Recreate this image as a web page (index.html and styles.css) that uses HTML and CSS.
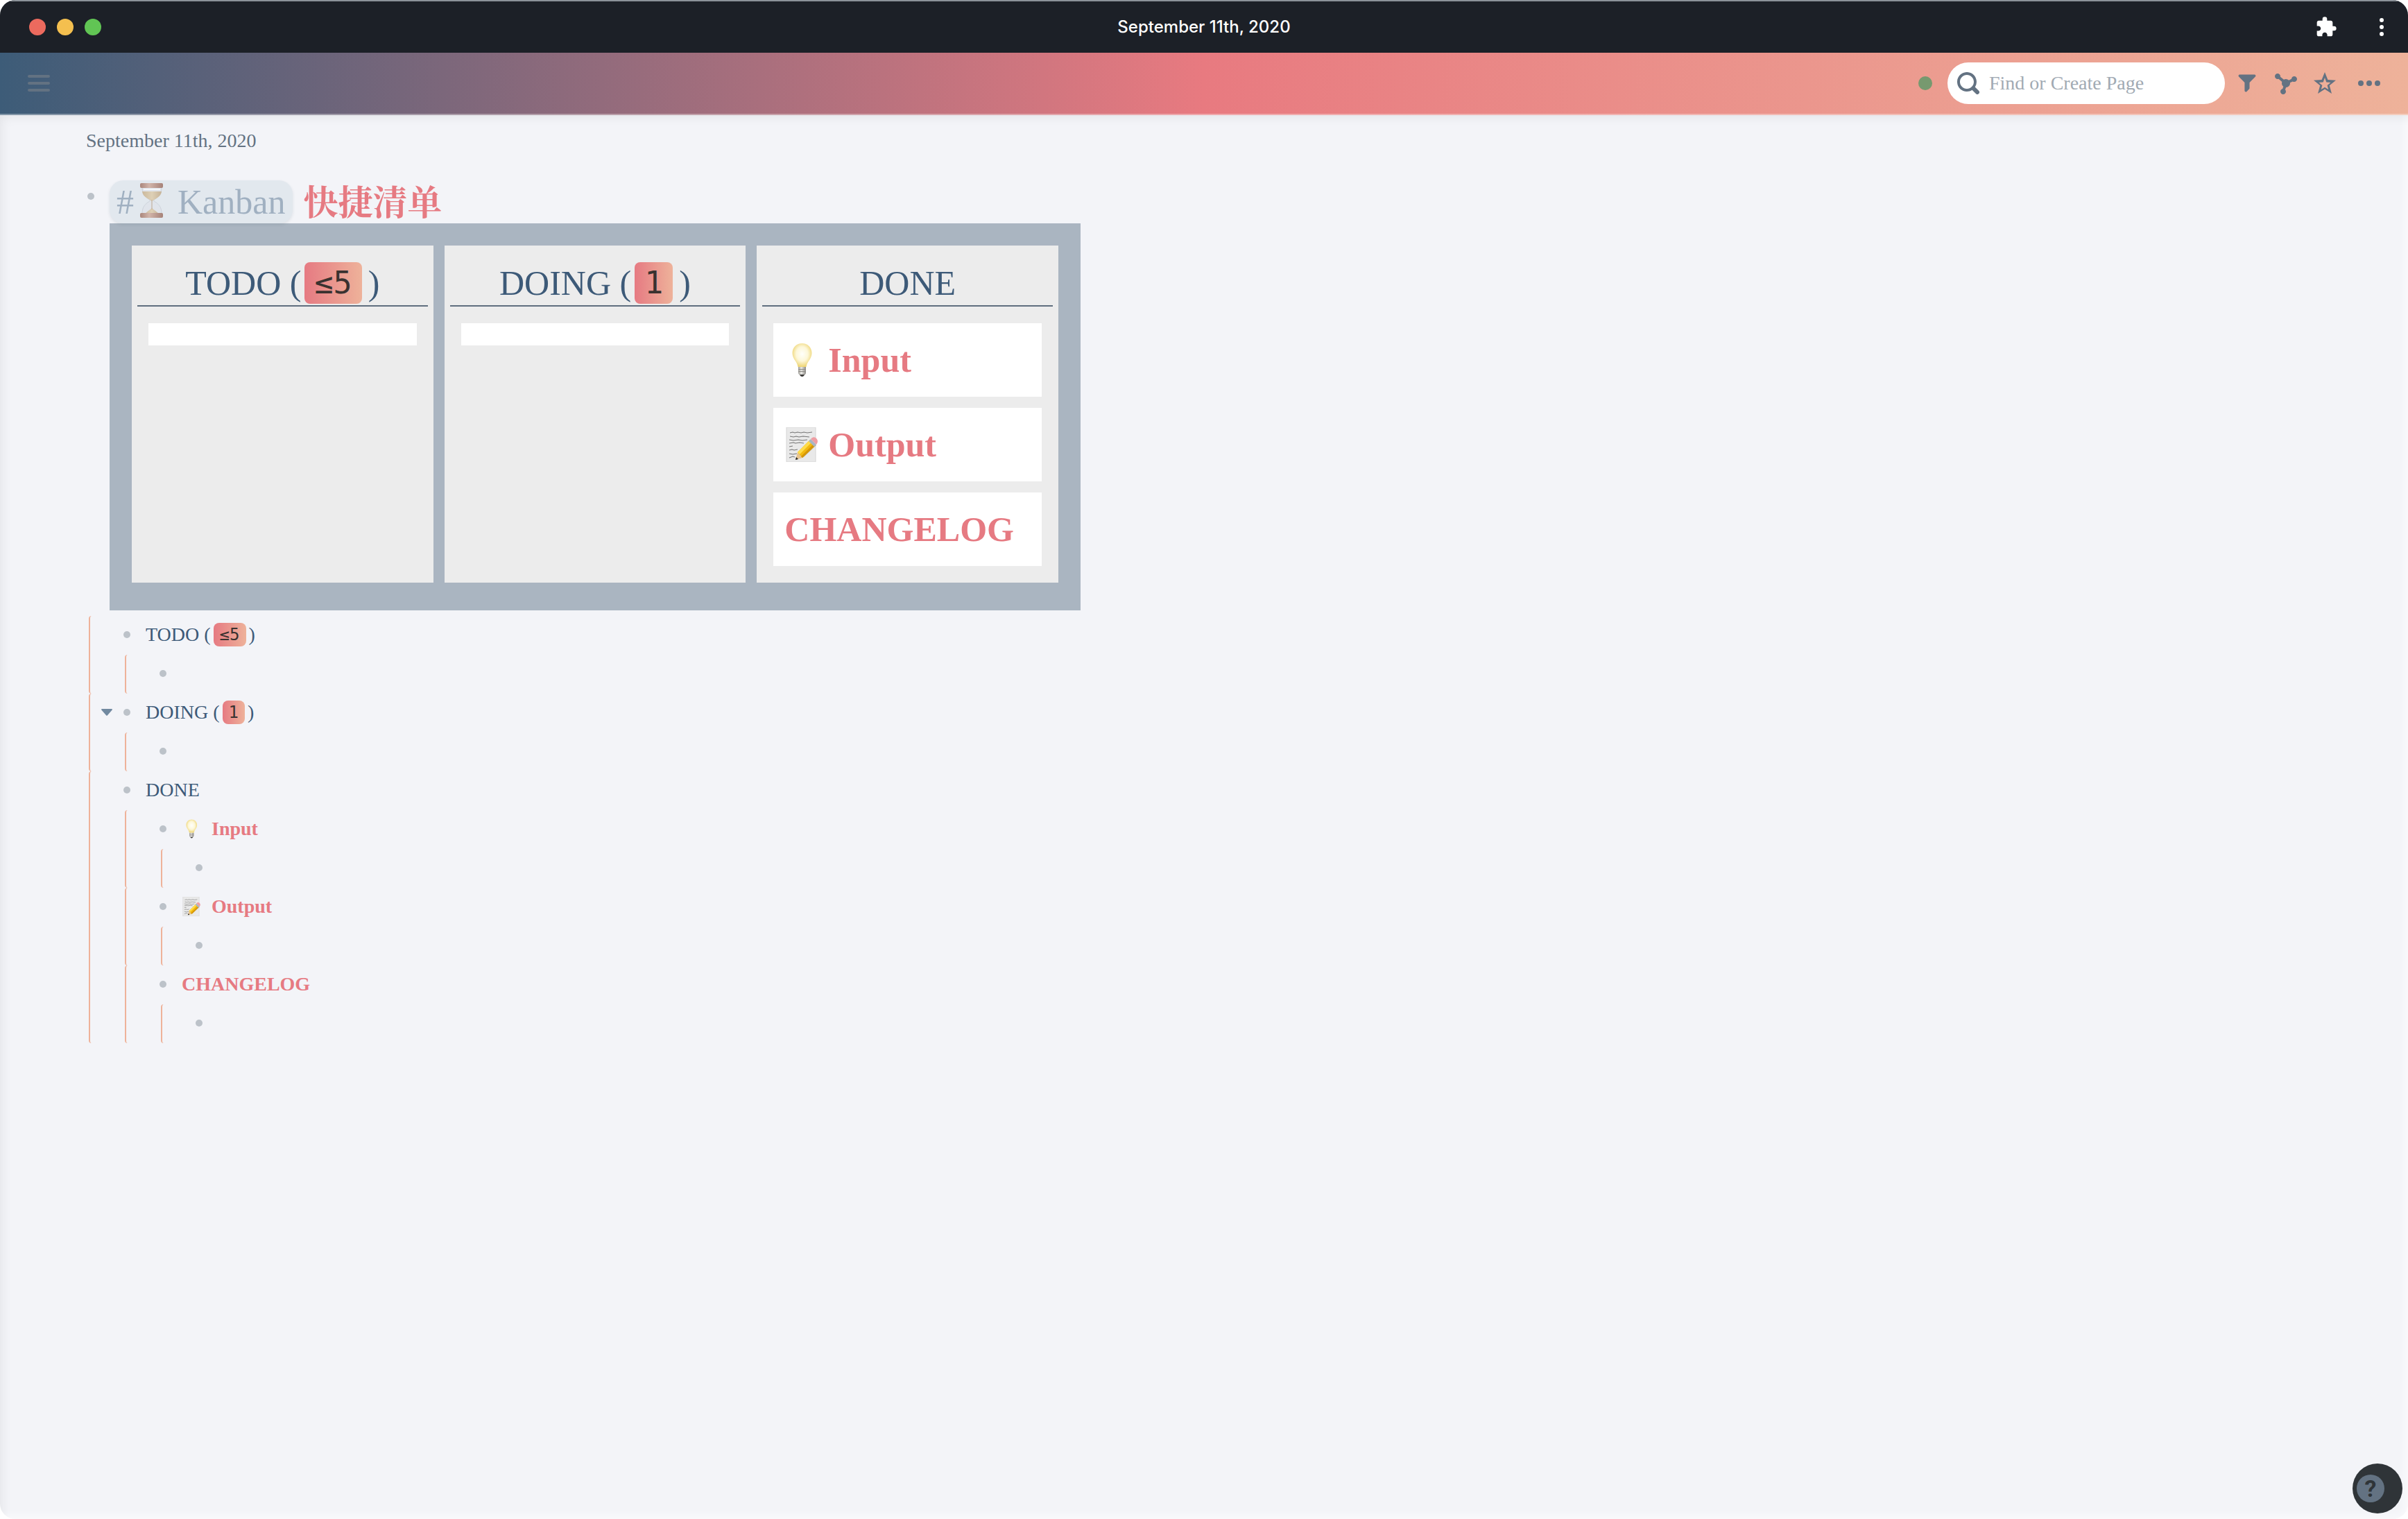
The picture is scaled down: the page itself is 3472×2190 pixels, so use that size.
FILE: index.html
```html
<!DOCTYPE html>
<html lang="en">
<head>
<meta charset="utf-8">
<title>September 11th, 2020</title>
<link rel="stylesheet" href="styles.css">
</head>
<body>
<svg class="defs" aria-hidden="true">
  <defs>
    <radialGradient id="glass" cx=".5" cy=".45" r=".55">
      <stop offset="0" stop-color="#fffffa"/><stop offset=".55" stop-color="#fdf7d8"/><stop offset="1" stop-color="#eed574"/>
    </radialGradient>
    <linearGradient id="metal"><stop offset="0" stop-color="#9c9a94"/><stop offset=".4" stop-color="#e9e8e4"/><stop offset="1" stop-color="#8b8984"/></linearGradient>
    <linearGradient id="wood"><stop offset="0" stop-color="#8d5340"/><stop offset=".4" stop-color="#c99a86"/><stop offset="1" stop-color="#874c3a"/></linearGradient>
    <linearGradient id="sand"><stop offset="0" stop-color="#c0a070"/><stop offset=".5" stop-color="#dcc49a"/><stop offset="1" stop-color="#b8976a"/></linearGradient>
    <symbol id="bulb" viewBox="0 0 50 50">
      <path d="M20 35h11v8q0 3-3 4h-5q-3-1-3-4z" fill="url(#metal)"/>
      <path d="M20 38.500h11M20 41.500h11" stroke="#8d8b86" stroke-width="1"/>
      <path d="M22 46h7q-1 3-3.500 3T22 46z" fill="#3e3c3a"/>
      <path d="M25.500 1C17.500 1 11.500 7 11.500 15c0 9 7 12 8 20h12c1-8 8-11 8-20 0-8-6-14-14-14z" fill="url(#glass)"/>
    </symbol>
    <symbol id="memo" viewBox="0 0 50 50">
      <path d="M3 0h42v50H3z" fill="#e9e9e9" stroke="#d5d5d5"/>
      <path d="M8 8l4-1 3 1 4-1 5 1 4-1 5 1 7-1M8 13l5 1 4-1 4 1 6-1 9 1M7 18l6 1 7-1 6 1 7-1M7 23l6-1 3 1 6-1 6 1M7 28l5-1M7 33l4-1 3 1 5-1M7 38l5 1 6-1M7 44l5-2 3 1" fill="none" stroke="#777" stroke-width="1.100"/>
      <path d="M17 46l3-10L38 18l8 8-18 17z" fill="#7c746a" opacity=".35"/>
      <path d="M16 47l3-11 7 8z" fill="#e8c48e"/>
      <path d="M16 47l1-4 3 3z" fill="#222"/>
      <path d="M19 36l18-18 8 8-19 18z" fill="#f2b90f"/>
      <path d="M19 36l18-18 3 3-18 18z" fill="#ffdc4a"/>
      <path d="M24 42l18-18 3 2-19 18z" fill="#d59608"/>
      <path d="M35 20l3-3 8 8-3 3z" fill="#a9b6c2"/>
      <path d="M38 17c3-4 6-3 8-1s3 5 0 9z" fill="#ee9ea4"/>
    </symbol>
    <symbol id="hourglass" viewBox="0 0 50 50">
      <path d="M12 6h28c0 11-5 14-12 19 7 5 12 8 12 19H12c0-11 5-14 12-19-7-5-12-8-12-19z" fill="#dfe3ea" stroke="#c3c8d2"/>
      <path d="M12 12h28c-1 7-6 9-14 14-8-5-13-7-14-14z" fill="url(#sand)"/>
      <path d="M26 24v12q4 3 10 8H16q6-5 10-8" fill="url(#sand)"/>
      <path d="M25.500 24h1v14h-1z" fill="#a98660"/>
      <rect x="9" y="0" width="33" height="7" rx="2" fill="url(#wood)"/>
      <rect x="9" y="43" width="33" height="7" rx="2" fill="url(#wood)"/>
      <path d="M14 8h24v2H14z" fill="#fff"/>
    </symbol>
  </defs>
</svg>

<div class="window">
  <header class="titlebar">
    <div class="lights"><i class="light close"></i><i class="light minimize"></i><i class="light zoom"></i></div>
    <div class="window-title">September 11th, 2020</div>
    <div class="window-tools">
      <button class="icon-button" aria-label="Extensions"><svg width="32" height="32" viewBox="0 0 24 24"><path d="M20.500 11H19V7c0-1.100-.9-2-2-2h-4V3.500a2.500 2.500 0 00-5 0V5H4c-1.100 0-1.990.9-1.990 2v3.800H3.500c1.490 0 2.700 1.210 2.700 2.700s-1.210 2.700-2.700 2.700H2V20c0 1.100.9 2 2 2h3.800v-1.500c0-1.490 1.210-2.700 2.700-2.700s2.700 1.210 2.700 2.700V22H17c1.100 0 2-.9 2-2v-4h1.500a2.500 2.500 0 000-5z"/></svg></button>
      <button class="icon-button" aria-label="Window menu"><svg width="8" height="32" viewBox="0 0 8 32"><circle cx="4" cy="6" r="3"/><circle cx="4" cy="16" r="3"/><circle cx="4" cy="26" r="3"/></svg></button>
    </div>
  </header>

  <nav class="topbar">
    <button class="icon-button" aria-label="Menu"><svg width="32" height="24" viewBox="0 0 32 24"><rect width="32" height="4" rx="2"/><rect y="10" width="32" height="4" rx="2"/><rect y="20" width="32" height="4" rx="2"/></svg></button>
    <div class="tools">
      <span class="sync"></span>
      <label class="search">
        <svg width="32" height="32" viewBox="0 0 16 16"><path d="M15.550 13.430l-2.670-2.680a6.940 6.940 0 001.110-3.760c0-3.870-3.130-7-7-7s-7 3.130-7 7 3.130 7 7 7c1.390 0 2.680-.42 3.760-1.110l2.680 2.670a1.498 1.498 0 102.120-2.120zm-8.560-1.440c-2.760 0-5-2.240-5-5s2.240-5 5-5 5 2.240 5 5-2.240 5-5 5z"/></svg>
        <input type="text" placeholder="Find or Create Page" aria-label="Find or Create Page">
      </label>
      <div class="actions">
        <button class="icon-button" aria-label="Filter"><svg width="32" height="32" viewBox="-1 -1 18 18"><path d="M13.990.99h-12a1.003 1.003 0 00-.71 1.710l4.710 4.710V14a1.003 1.003 0 001.710.71l2-2c.18-.18.29-.43.29-.71V7.410L14.700 2.700a1.003 1.003 0 00-.71-1.710z"/></svg></button>
        <button class="icon-button" aria-label="Graph"><svg width="32" height="32" viewBox="0 0 16 16"><path d="M14 3c-1.060 0-1.920.83-1.990 1.880l-1.930.97A2.950 2.950 0 008 5c-.56 0-1.080.16-1.520.43L3.970 3.340C3.980 3.230 4 3.120 4 3c0-1.100-.9-2-2-2s-2 .9-2 2 .9 2 2 2c.24 0 .47-.05.68-.13l2.510 2.090C5.080 7.290 5 7.630 5 8c0 .96.46 1.810 1.160 2.350l-.56 1.690c-.91.19-1.600.99-1.600 1.960 0 1.100.9 2 2 2s2-.9 2-2c0-.51-.2-.97-.51-1.320l.56-1.690C9.680 10.900 11 9.610 11 8c0-.12-.02-.23-.04-.35l1.900-.95c.32.18.71.3 1.140.3 1.100 0 2-.9 2-2s-.9-2-2-2z"/></svg></button>
        <button class="icon-button wide-gap" aria-label="Add to shortcuts"><svg width="32" height="32" viewBox="0 0 32 32"><path fill-rule="evenodd" d="M16 0l4.400 11 11.600.7-9.200 7.600L26 31l-10-6.500L6 31l3.200-11.700L0 11.700l11.600-.7zM16 8l-2.300 6.400-6.200.5 4.900 4-1.600 6.100 5.200-3.300 5.200 3.300-1.600-6.100 4.900-4-6.200-.5z"/></svg></button>
        <button class="icon-button" aria-label="More"><svg width="32" height="32" viewBox="0 0 32 32"><circle cx="4" cy="16" r="4"/><circle cx="16" cy="16" r="4"/><circle cx="28" cy="16" r="4"/></svg></button>
      </div>
    </div>
  </nav>

  <main class="page">
    <h1 class="page-title">September 11th, 2020</h1>

    <section class="block">
      <span class="bullet"></span>
      <div class="block-body">
        <div class="heading">
          <a class="tag" href="#kanban">#<svg class="emoji" role="img" aria-label="hourglass"><use href="#hourglass"/></svg><span>Kanban</span></a>
          <strong class="cjk" lang="zh">快捷清单</strong>
        </div>

        <div class="board">
          <section class="column">
            <h2 class="column-title"><span>TODO (</span><code class="count">≤5</code><span>)</span></h2>
            <div class="cards"><div class="card"></div></div>
          </section>
          <section class="column">
            <h2 class="column-title"><span>DOING (</span><code class="count">1</code><span>)</span></h2>
            <div class="cards"><div class="card"></div></div>
          </section>
          <section class="column">
            <h2 class="column-title">DONE</h2>
            <div class="cards">
              <div class="card"><strong class="card-text"><svg class="emoji" role="img" aria-label="light bulb"><use href="#bulb"/></svg>Input</strong></div>
              <div class="card"><strong class="card-text"><svg class="emoji" role="img" aria-label="memo"><use href="#memo"/></svg>Output</strong></div>
              <div class="card"><strong class="card-text">CHANGELOG</strong></div>
            </div>
          </section>
        </div>
      </div>
    </section>

    <ul class="outline">
      <li>
        <div class="row"><span class="caret"></span><span class="bullet"></span><div class="row-text"><span>TODO (</span><code class="count">≤5</code><span>)</span></div></div>
        <ul><li><div class="row"><span class="caret"></span><span class="bullet"></span></div></li></ul>
      </li>
      <li>
        <div class="row"><button class="caret" aria-label="Collapse"><svg width="16" height="10" viewBox="0 0 16 10"><path d="M1 0h14q1.500.5.500 1.800L9 9.300q-1 1-2 0L.5 1.800Q-.5.500 1 0z"/></svg></button><span class="bullet"></span><div class="row-text"><span>DOING (</span><code class="count">1</code><span>)</span></div></div>
        <ul><li><div class="row"><span class="caret"></span><span class="bullet"></span></div></li></ul>
      </li>
      <li>
        <div class="row"><span class="caret"></span><span class="bullet"></span><div class="row-text">DONE</div></div>
        <ul>
          <li>
            <div class="row"><span class="caret"></span><span class="bullet"></span><strong class="row-text"><svg class="emoji" role="img" aria-label="light bulb"><use href="#bulb"/></svg>Input</strong></div>
            <ul><li><div class="row"><span class="caret"></span><span class="bullet"></span></div></li></ul>
          </li>
          <li>
            <div class="row"><span class="caret"></span><span class="bullet"></span><strong class="row-text"><svg class="emoji" role="img" aria-label="memo"><use href="#memo"/></svg>Output</strong></div>
            <ul><li><div class="row"><span class="caret"></span><span class="bullet"></span></div></li></ul>
          </li>
          <li>
            <div class="row"><span class="caret"></span><span class="bullet"></span><strong class="row-text">CHANGELOG</strong></div>
            <ul><li><div class="row"><span class="caret"></span><span class="bullet"></span></div></li></ul>
          </li>
        </ul>
      </li>
    </ul>
  </main>

  <button class="help" aria-label="Help"><span class="help-mark">?</span></button>
</div>
</body>
</html>
```

FILE: styles.css
```css
* {
  box-sizing: border-box;
}

:root {
  --slate: #637282;
  --navy: #3d5a78;
  --rose: #e67a82;
  --peach: #eeb29a;
  --serif: "Liberation Serif", "Times New Roman", "Noto Serif CJK SC", "Noto Sans CJK SC", serif;
}

body {
  margin: 0;
  background: #fff;
  color: var(--navy);
  font: 28px/34px var(--serif);
}

button {
  border: 0;
  padding: 0;
  background: none;
  font: inherit;
}

svg {
  display: block;
  fill: currentColor;
}

.defs {
  position: absolute;
  width: 0;
  height: 0;
}

.window {
  display: flex;
  flex-direction: column;
  min-height: 100vh;
  border-radius: 22px;
  overflow: hidden;
  background: #f3f4f8;
}

/* Title bar */

.titlebar {
  display: grid;
  grid-template-columns: 1fr auto 1fr;
  align-items: center;
  height: 76px;
  padding: 0 34px;
  border-top: 2px solid #8b9299;
  background: #1c2027;
  color: #fff;
}

.lights {
  display: flex;
  gap: 16px;
  padding-left: 8px;
}

.light {
  width: 24px;
  height: 24px;
  border-radius: 50%;
}

.close { background: #ec6a5e; }
.minimize { background: #f4bf4f; }
.zoom { background: #61c554; }

.window-title {
  font: 500 24px/32px Inter, "Liberation Sans", sans-serif;
}

.window-tools {
  display: flex;
  justify-content: flex-end;
  gap: 60px;
}

.icon-button {
  color: inherit;
}

/* Top bar */

.topbar {
  display: flex;
  align-items: center;
  justify-content: space-between;
  height: 90px;
  padding: 0 40px;
  border-bottom: 2px solid rgba(255, 255, 255, 0.35);
  background: linear-gradient(90deg, #3d5c78, #e87a80 50%, #eeb29a) border-box;
  color: var(--slate);
}

.tools {
  display: flex;
  align-items: center;
}

.sync {
  width: 20px;
  height: 20px;
  margin-right: 22px;
  border-radius: 50%;
  background: #77996f;
}

.search {
  display: flex;
  align-items: center;
  gap: 14px;
  width: 400px;
  height: 60px;
  margin-right: 16px;
  padding: 0 14px;
  border-radius: 30px;
  background: #fff;
}

.search input {
  flex: 1;
  min-width: 0;
  border: 0;
  padding: 0;
  background: none;
  color: var(--slate);
  font: inherit;
}

.search input::placeholder {
  color: #a1aab3;
  opacity: 1;
}

.actions {
  display: flex;
  gap: 24px;
}

.wide-gap {
  margin-right: 8px;
}

/* Page */

.page {
  flex: 1;
  padding: 20px 124px;
  box-shadow:
    inset 14px 14px 16px -12px rgba(0, 0, 0, 0.07),
    inset -14px -14px 14px -10px rgba(255, 255, 255, 0.7);
}

.page-title {
  margin: 0 0 40px;
  color: var(--slate);
  font: inherit;
}

.bullet {
  flex: none;
  width: 10px;
  height: 10px;
  border-radius: 50%;
  background: #bcc2c9;
}

.block {
  display: flex;
  gap: 22px;
  padding-left: 2px;
}

.block > .bullet {
  margin-top: 18px;
}

.heading {
  display: flex;
  gap: 16px;
  height: 62px;
  font-size: 50px;
  line-height: 62px;
}

.tag {
  display: flex;
  align-items: center;
  padding: 0 10px;
  border-radius: 20px;
  background: #e2e8ee;
  box-shadow: 0 2px 4px rgba(60, 80, 100, 0.12);
  color: #a0b0c1;
  text-decoration: none;
}

.tag .emoji {
  margin-bottom: 4px;
  opacity: 0.65;
}

.cjk {
  color: var(--rose);
  line-height: 66px;
}

.emoji {
  flex: none;
  width: 50px;
  height: 50px;
  margin-right: 13px;
}

/* Kanban board */

.board {
  display: grid;
  grid-template-columns: repeat(3, 1fr);
  gap: 16px;
  width: 1400px;
  padding: 32px 32px 40px;
  background: #aab5c1;
}

.column {
  padding: 0 8px;
  background: #ececec;
}

.column-title {
  display: flex;
  justify-content: center;
  margin: 0;
  padding: 24px 0 2px;
  border-bottom: 2px solid #5f6e7e;
  font-weight: 400;
  font-size: 50px;
  line-height: 60px;
}

.count {
  margin: 0 4px;
  padding: 0 9px;
  border-radius: 8px;
  background: linear-gradient(90deg, #e67a82, #eeb29a);
  color: #3a3230;
  font: 24px/34px "DejaVu Sans Mono", monospace;
}

.column-title .count {
  margin: 0 9px 0 5px;
  padding: 0 14px;
  font-size: 45px;
  line-height: 60px;
}

.cards {
  display: flex;
  flex-direction: column;
  gap: 16px;
  padding: 24px 16px;
}

.card {
  padding: 16px;
  background: #fff;
}

.card-text {
  display: flex;
  align-items: center;
  color: var(--rose);
  font-size: 50px;
  line-height: 74px;
}

/* Outline */

.outline {
  margin: 8px 0 0 4px;
}

.outline,
.outline ul {
  padding: 0;
  list-style: none;
}

.outline ul {
  margin: 0 0 0 50px;
}

.outline li {
  border-left: 2px solid var(--peach);
  border-radius: 4px;
}

.row {
  display: flex;
  align-items: center;
  height: 56px;
  padding: 0 0 2px 16px;
}

.caret {
  width: 16px;
  margin-right: 16px;
  color: #7189a0;
}

.row-text {
  display: flex;
  align-items: center;
  margin-left: 22px;
}

strong.row-text {
  color: var(--rose);
}

.row-text .emoji {
  width: 28px;
  height: 28px;
  margin-right: 15px;
}

/* Help */

.help {
  position: fixed;
  right: 8px;
  bottom: 8px;
  display: flex;
  align-items: center;
  width: 72px;
  height: 72px;
  padding-left: 6px;
  border-radius: 50%;
  background: #2f3438;
}

.help-mark {
  width: 40px;
  height: 40px;
  border-radius: 50%;
  background: #637282;
  color: #2f3438;
  font: 700 34px/40px Roboto, "Liberation Sans", sans-serif;
}
```
